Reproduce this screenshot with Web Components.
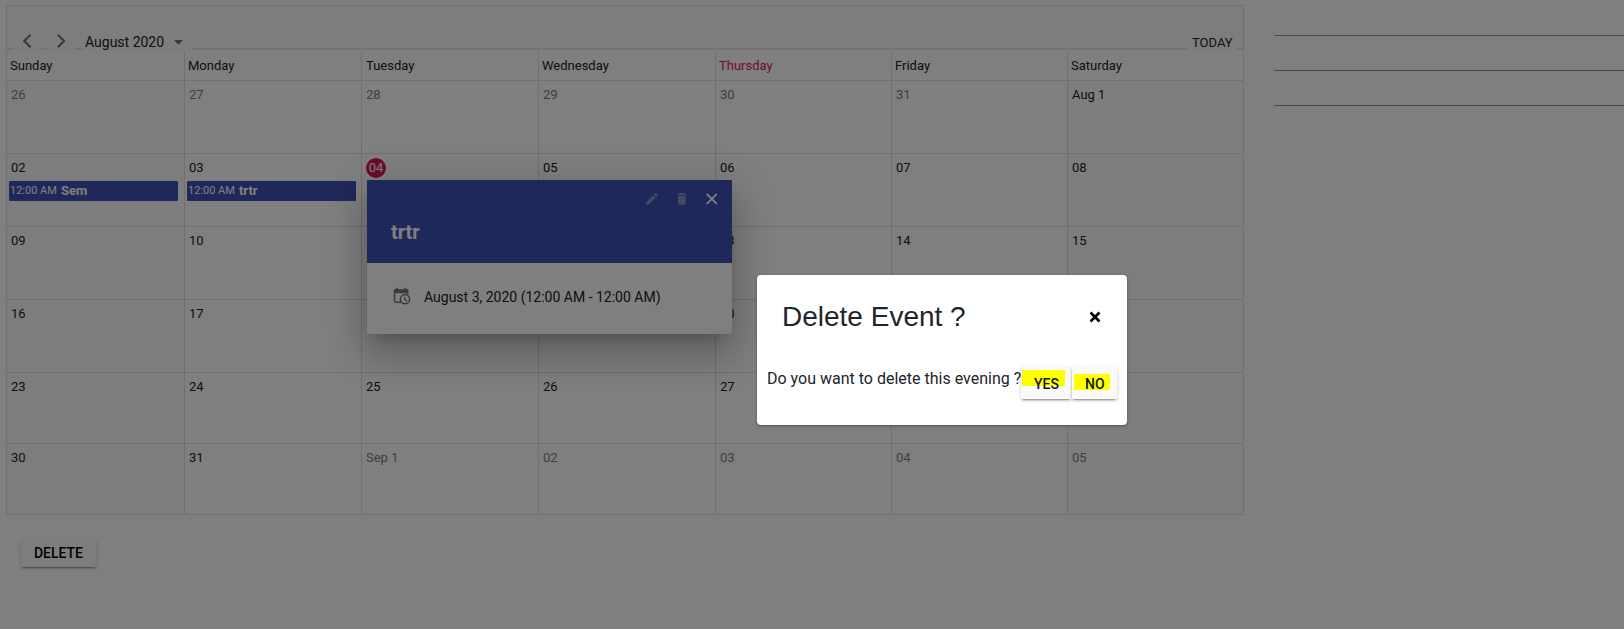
<!DOCTYPE html>
<html lang="en">
<head>
<meta charset="utf-8">
<title>Scheduler</title>
<style>
html,body{margin:0;height:629px;overflow:hidden;background:#fff;font-family:Roboto,"Liberation Sans",sans-serif}
</style>
</head>
<body>
<app-page></app-page>
<script>
const define = (name, html, setup) => {
  const t = document.createElement('template');
  t.innerHTML = html;
  customElements.define(name, class extends HTMLElement {
    constructor() {
      super();
      this.attachShadow({mode: 'open'}).append(t.content.cloneNode(true));
    }
    connectedCallback() { if (setup) setup(this, this.shadowRoot); }
  });
};

define('raised-button', `
<style>
:host{display:flex;box-sizing:border-box;align-items:center;justify-content:center;height:var(--h,28px);width:var(--w,75px);border-radius:2px;background:#fafafa;color:#000;font-size:14px;line-height:20px;box-shadow:0 3px 1px -2px rgba(0,0,0,.2),0 2px 2px 0 rgba(0,0,0,.14),0 1px 5px 0 rgba(0,0,0,.12);font-weight:500}
</style><slot></slot>`);

define('calendar-toolbar', `
<style>
:host{display:block;height:45px;background:#fafafa}
.in{display:flex;height:45px;box-sizing:border-box;background:linear-gradient(#dfdfdf,#dfdfdf) 0 42px/100% 1px no-repeat,linear-gradient(#f0f0f0,#f0f0f0) 0 43px/100% 1px no-repeat}
.b{display:flex;align-items:center;height:26px;margin-top:19px;background:#fafafa;box-sizing:border-box}
.nav{width:27px;margin-left:7px;padding:8px 0 0 4px}
.month{width:110px;margin-left:7px;font-size:14px;padding:8px 0 0 3px;color:#212121}
.month svg{margin-left:10px}
.today{width:48px;margin-left:auto;margin-right:7px;font-size:13px;padding:9px 0 0 4px;color:#212121}
</style>
<div class="in">
 <div class="b nav"><svg width="20" height="16" viewBox="0 0 20 16"><path d="M12.600 .8L6.300 7l6.300 6.200" fill="none" stroke="#757575" stroke-width="2.200"/></svg></div>
 <div class="b nav"><svg width="20" height="16" viewBox="0 0 20 16"><path d="M5.800 .8L12 7l-6.200 6.200" fill="none" stroke="#757575" stroke-width="2.200"/></svg></div>
 <div class="b month"><span>August 2020</span><svg width="10" height="5"><path d="M0 0h9L4.500 4.800z" fill="#757575"/></svg></div>
 <div class="b today">TODAY</div>
</div>`);

define('day-cell', `
<style>
:host{display:block;box-sizing:border-box;border-right:1px solid #e0e0e0;border-bottom:1px solid #e0e0e0;background:#fff;font-size:13px;line-height:16px;color:#212121;min-width:0;padding:4px 6px 0 1px}
:host([weekend]){background:#fbfbfb}
:host([other]){color:#7d7d7d}
.n{display:inline-block;height:20px;line-height:20px;padding:0 3px;box-sizing:border-box}
:host([today]) .n{width:20px;border-radius:50%;background:#d9155b;color:#fff;margin-left:3px;text-align:center;padding:0}
</style><div><div class="n"><slot></slot></div></div><slot name="event"></slot>`);

define('event-chip', `
<style>
:host{display:flex;box-sizing:border-box;align-items:center;width:169px;height:20px;background:#3f51b5;color:#fff;border-radius:1px;margin:3px 0 0 1px;padding-left:1px;gap:4px;font-size:11px;white-space:nowrap}
b{font-size:13px;font-weight:700}
</style><span><slot name="time"></slot></span><b><slot></slot></b>`);

define('month-calendar', `
<style>
:host{display:block;box-sizing:border-box;width:1238px;height:510px;border:1px solid #e0e0e0;border-bottom:0;border-right:0}
.head,.grid{display:grid;grid-template-columns:178px 177px 177px 177px 176px 176px 176px}
.head span{box-sizing:border-box;height:30px;border-right:1px solid #e0e0e0;border-bottom:1px solid #e0e0e0;padding:1px 0 0 3px;font-size:13px;line-height:28px;color:#212121}
.head span:nth-child(3){padding-left:4px}
.head .hot{color:#e3165b}
.grid{grid-template-rows:73px 73px 73px 73px 71px 71px}
calendar-toolbar{border-right:1px solid #e0e0e0}
</style>
<calendar-toolbar></calendar-toolbar>
<div class="head"></div><div class="grid"></div>`, (el, root) => {
  root.querySelector('.head').innerHTML = ['Sunday','Monday','Tuesday','Wednesday','Thursday','Friday','Saturday']
    .map(d => `<span${d === 'Thursday' ? ' class="hot"' : ''}>${d}</span>`).join('');
  const days = ['26','27','28','29','30','31','Aug 1','02','03','04','05','06','07','08'];
  for (let i = 9; i <= 31; i++) days.push(String(i).padStart(2, '0'));
  days.push('Sep 1','02','03','04','05');
  const events = {7: 'Sem', 8: 'trtr'};
  root.querySelector('.grid').innerHTML = days.map((d, i) =>
    `<day-cell${i < 6 || i > 36 ? ' other' : ''}${i % 7 === 0 || i % 7 === 6 ? ' weekend' : ''}${i === 9 ? ' today' : ''}>${d}${
      events[i] ? `<event-chip slot="event"><span slot="time">12:00 AM</span>${events[i]}</event-chip>` : ''}</day-cell>`).join('');
});

define('event-popup', `
<style>
:host{display:block;width:365px;height:154px;background:#fff;border-radius:0 0 2px 2px;box-shadow:0 11px 15px -7px rgba(0,0,0,.2),0 24px 38px 3px rgba(0,0,0,.14),0 9px 46px 8px rgba(0,0,0,.12)}
header{height:83px;box-sizing:border-box;background:#3f51b5;color:#fff;padding:9px 10px 0 24px}
.tools{display:flex;justify-content:flex-end;gap:10px;height:20px}
h3{margin:11px 0 0;font-size:20px;line-height:24px;font-weight:700}
.body{display:flex;height:71px;align-items:center;padding:0 0 3px 26px;box-sizing:border-box;font-size:14px;color:#212121}
.body svg{margin-right:13px;margin-top:-2px}
</style>
<header>
<div class="tools">
<svg width="20" height="20" viewBox="0 0 20 20"><g transform="translate(2.200 2.200) scale(.64)" fill="#fff" opacity=".38"><path d="M3 17.250V21h3.750L17.810 9.940l-3.750-3.750zM20.710 7.040a1 1 0 0 0 0-1.410l-2.340-2.340a1 1 0 0 0-1.410 0l-1.830 1.830 3.750 3.750z"/></g></svg>
<svg width="20" height="20" viewBox="0 0 20 20"><g transform="translate(2.200 2.200) scale(.64)" fill="#fff" opacity=".38"><path d="M6 19c0 1.100.9 2 2 2h8c1.100 0 2-.9 2-2V7H6zM19 4h-3.500l-1-1h-5l-1 1H5v2h14z"/></g></svg>
<svg width="20" height="20" viewBox="0 0 20 20"><path d="M4.800 4.900l10 10m0-10l-10 10" stroke="#fff" stroke-width="1.900" fill="none"/></svg>
</div>
<h3>trtr</h3>
</header>
<div class="body"><svg width="18" height="18" viewBox="0 0 18 18" fill="none" stroke="#757575"><path d="M8.500 15.200H2.700a1.200 1.200 0 0 1-1.200-1.200V3.200h13.200v4" stroke-width="1.500"/><path d="M1 2.200h14v4H1z" fill="#757575" stroke="none"/><path d="M4 .8v2.500M12 .8v2.500" stroke-width="1.700"/><circle cx="12" cy="12.200" r="4.600" stroke-width="1.500" fill="#fff"/><path d="M11.800 9.700v2.900l2.300 1.300" stroke-width="1.200"/></svg><span>August 3, 2020 (12:00 AM - 12:00 AM)</span></div>`);

define('confirm-dialog', `
<style>
:host{display:block;box-sizing:border-box;width:370px;height:150px;background:#fff;border-radius:4px;box-shadow:0 1px 3px rgba(0,0,0,.35)}
.top{display:flex;align-items:center;justify-content:space-between;height:84px;box-sizing:border-box;padding:0 26px 0 25px}
h2{margin:0;font:400 28px/34px "Liberation Sans",Arial,sans-serif;color:#212529}
.row{display:flex;align-items:flex-start;padding:8px 0 0 10px;font-size:16px;line-height:24px;color:#212529}
.row>span{width:254px;white-space:nowrap}
raised-button{--h:32px}
raised-button.y{--w:50px;margin-right:1px}raised-button.n{--w:45px}
mark{color:#111;display:flex;box-sizing:border-box;background:#ff0}
.y mark{width:43px;height:16px;margin:-10px 6px 0 0;padding:4px 0 0 12.500px}
.n mark{width:36px;height:16px;margin:-2px 5px 0 0;padding:1px 0 0 11px;line-height:18px}
</style>
<div class="top"><h2>Delete Event ?</h2><svg width="12" height="12" viewBox="0 0 12 12"><path d="M1.500 1.500l9 9m0-9l-9 9" stroke="#000" stroke-width="2.700"/></svg></div>
<div class="row"><span>Do you want to delete this evening ?</span><raised-button class="y"><mark>YES</mark></raised-button><raised-button class="n"><mark>NO</mark></raised-button></div>`);

define('side-fields', `
<style>:host{display:flex;flex-direction:column;flex:1;margin-left:30px}i{display:block;height:35px;box-sizing:border-box;border-bottom:1px solid #949494}</style><i></i><i></i><i></i>`);

define('app-page', `
<style>
:host{display:block;position:relative;width:1624px;height:629px;overflow:hidden}
.main{display:flex;padding:5px 0 0 6px}
side-fields{margin-top:-4px}
.foot{padding:24px 0 0 21px}
event-popup{position:absolute;left:367px;top:180px}
.shade{position:absolute;inset:0;background:rgba(0,0,0,.5)}
confirm-dialog{position:absolute;left:757px;top:275px}
</style>
<div class="main"><month-calendar></month-calendar><side-fields></side-fields></div>
<div class="foot"><raised-button>DELETE</raised-button></div>
<event-popup></event-popup>
<div class="shade"></div>
<confirm-dialog></confirm-dialog>`);
</script>
</body>
</html>
